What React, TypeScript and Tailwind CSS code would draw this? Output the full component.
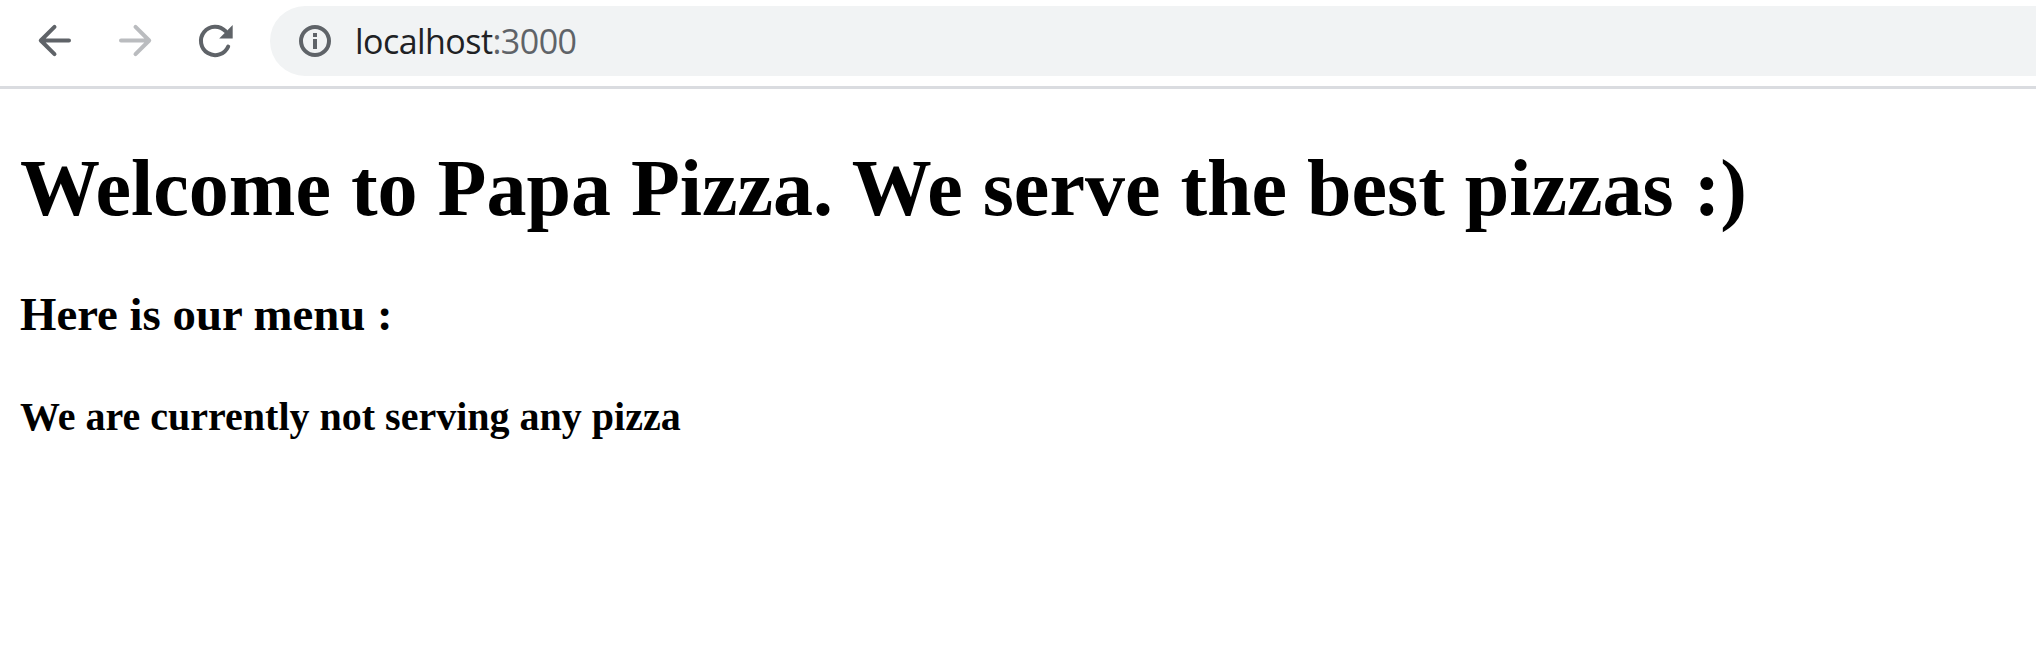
export default function App() {
  return (
    <div className="flex h-[651px] flex-col overflow-hidden bg-white text-black">
      <header className="flex h-[89px] shrink-0 items-start border-b-[3px] border-[#dadce0] pl-[35px] pt-[6px]">
        <div className="flex h-[70px] items-center gap-[40px]">
          <svg className="size-[40px]" viewBox="35 21 40 40" fill="none" stroke="#5f6368" strokeWidth="4" strokeLinecap="round" strokeLinejoin="round">
            <path d="M69 40.5H41M54.5 26.8L40.8 40.5L54.5 54.2" />
          </svg>
          <svg className="size-[40px]" viewBox="115 21 40 40" fill="none" stroke="#babcbf" strokeWidth="4" strokeLinecap="round" strokeLinejoin="round">
            <path d="M121 40.5H149M135.5 26.8L149.2 40.5L135.5 54.2" />
          </svg>
          <svg className="size-[40px]" viewBox="195 21 40 40" fill="none">
            <path d="M228.2 46.5A14.2 14.2 0 1 1 225.5 31.2" stroke="#5f6368" strokeWidth="4" strokeLinecap="round" />
            <path d="M232.7 25V38.4H219.2Z" fill="#5f6368" />
          </svg>
        </div>
        <div className="ml-[35px] flex h-[70px] grow items-center rounded-l-full bg-[#f1f3f4] pl-[25px]">
          <svg className="size-[40px]" viewBox="295 21 40 40" fill="none">
            <circle cx="315" cy="41" r="14" stroke="#5f6368" strokeWidth="4" />
            <path d="M313 33h4v4h-4zM313 39h4v10h-4z" fill="#5f6368" />
          </svg>
          <span className="ml-[20px] pb-px font-['Open_Sans',sans-serif] text-[34px] leading-[46px] tracking-[-0.55px] text-[#202124]">localhost<span className="text-[#5f6368]">:3000</span></span>
        </div>
      </header>
      <main className="flex flex-col pl-[20px] font-['Liberation_Serif',serif] font-bold">
        <h1 className="mt-[53px] whitespace-nowrap text-[80px] leading-[92px]">Welcome to Papa Pizza. We serve the best pizzas :)</h1>
        <h2 className="mt-[53px] whitespace-nowrap text-[46.8px] leading-[54px]">Here is our menu :</h2>
        <h3 className="mt-[53px] whitespace-nowrap text-[40px] leading-[46px]">We are currently not serving any pizza</h3>
      </main>
    </div>
  );
}
